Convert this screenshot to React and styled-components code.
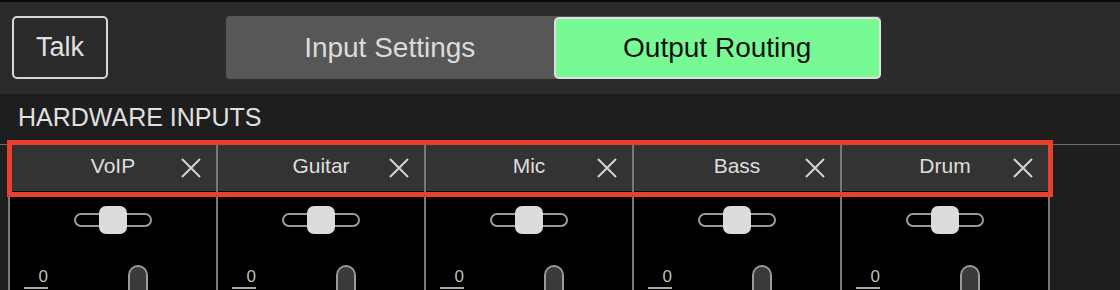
import React from 'react'
import styled, { createGlobalStyle } from 'styled-components'

const channels = ['VoIP', 'Guitar', 'Mic', 'Bass', 'Drum']

function CloseIcon() {
    return (
        <svg width="20" height="20" viewBox="0 0 20 20">
            <path d="M1 1 L19 19 M19 1 L1 19" stroke="#d4d4d4" strokeWidth="2" fill="none" />
        </svg>
    )
}

function Channel({ name, last }) {
    return (
        <Column last={last}>
            <Header>
                <span />
                <Name>{name}</Name>
                <Close><CloseIcon /></Close>
            </Header>
            <Body>
                <PanRow>
                    <PanTrack>
                        <PanKnob />
                    </PanTrack>
                </PanRow>
                <MeterRow>
                    <Level>0</Level>
                    <FaderThumb />
                </MeterRow>
            </Body>
        </Column>
    )
}

function App() {
    return (
        <Page>
            <GlobalStyle />
            <TopBar>
                <TalkButton>Talk</TalkButton>
                <Segmented>
                    <Segment>Input Settings</Segment>
                    <Segment active>Output Routing</Segment>
                </Segmented>
            </TopBar>
            <Section>
                <Title>HARDWARE INPUTS</Title>
                <Strips>
                    {channels.map((c, i) => (
                        <Channel key={c} name={c} last={i === channels.length - 1} />
                    ))}
                    <Highlight />
                </Strips>
            </Section>
        </Page>
    )
}

export default App

const GlobalStyle = createGlobalStyle`
    body {
        margin: 0;
        background: #1e1e1e;
        font-family: "Liberation Sans", Arial, sans-serif;
    }
`

const Page = styled.div`
    width: 1120px;
    height: 290px;
    overflow: hidden;
`

const TopBar = styled.div`
    height: 78px;
    border-top: 2px solid #0c0c0c;
    background: #2b2b2b;
    padding: 14px 12px 0;
    display: flex;
    align-items: flex-start;
`

const TalkButton = styled.div`
    box-sizing: border-box;
    width: 96px;
    height: 63px;
    border: 2px solid #d8d8d8;
    border-radius: 5px;
    display: flex;
    align-items: center;
    justify-content: center;
    color: #e0e0e0;
    font-size: 27px;
    margin-right: 118px;
`

const Segmented = styled.div`
    width: 655px;
    height: 63px;
    background: #575757;
    border-radius: 4px;
    display: flex;
`

const Segment = styled.div`
    box-sizing: border-box;
    flex: 1;
    display: flex;
    align-items: center;
    justify-content: center;
    font-size: 28px;
    color: ${p => (p.active ? '#111' : '#dcdcdc')};
    background: ${p => (p.active ? '#77f993' : 'transparent')};
    border: 2px solid ${p => (p.active ? '#e0e0e0' : 'transparent')};
    border-radius: 5px;
    margin: ${p => (p.active ? '1px 0 0' : '0')};
`

const Section = styled.div`
    background: #1e1e1e;
`

const Title = styled.div`
    box-sizing: border-box;
    height: 50px;
    padding: 0 0 4px 18px;
    display: flex;
    align-items: center;
    color: #e0e0e0;
    font-size: 25px;
`

const Strips = styled.div`
    position: relative;
    display: flex;
    padding-left: 8px;
    border-top: 1px solid #6e6e6e;
`

const Column = styled.div`
    box-sizing: border-box;
    width: ${p => (p.last ? '210px' : '208px')};
    border-left: 2px solid #777;
    border-right: ${p => (p.last ? '2px solid #777' : 'none')};
    background: #000;
    height: 150px;
`

const Header = styled.div`
    height: 46px;
    background: #333;
    display: grid;
    grid-template-columns: 1fr auto 1fr;
    align-items: center;
`

const Name = styled.div`
    color: #dedede;
    font-size: 21px;
    margin-bottom: 4px;
`

const Close = styled.div`
    justify-self: end;
    padding-right: 15px;
    display: flex;
`

const Body = styled.div`
    padding-top: 15px;
`

const PanRow = styled.div`
    display: flex;
    justify-content: center;
`

const PanTrack = styled.div`
    box-sizing: border-box;
    width: 78px;
    height: 14px;
    margin: 7px 0;
    border: 2px solid #9a9a9a;
    border-radius: 7px;
    display: flex;
    align-items: center;
    justify-content: center;
`

const PanKnob = styled.div`
    width: 28px;
    height: 28px;
    flex-shrink: 0;
    border-radius: 7px;
    background: #dcdcdc;
`

const MeterRow = styled.div`
    display: flex;
    align-items: flex-start;
    padding-left: 14px;
    margin-top: 31px;
`

const Level = styled.div`
    box-sizing: border-box;
    width: 24px;
    height: 22px;
    margin-top: 2px;
    text-align: right;
    color: #bdbdbd;
    font-size: 17px;
    line-height: 20px;
    border-bottom: 2px solid #a8a8a8;
`

const FaderThumb = styled.div`
    box-sizing: border-box;
    width: 20px;
    height: 40px;
    margin-left: 80px;
    border: 2px solid #9a9a9a;
    border-bottom: none;
    border-radius: 10px 10px 0 0;
    background: #3a3a3a;
`

const Highlight = styled.div`
    position: absolute;
    left: 7px;
    top: -5px;
    width: 1046px;
    height: 57px;
    box-sizing: border-box;
    border: 5px solid #e8402a;
    pointer-events: none;
`
